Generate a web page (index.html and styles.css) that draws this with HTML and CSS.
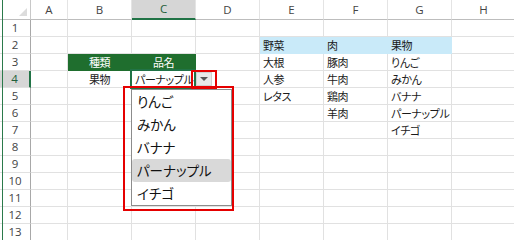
FILE: index.html
```html
<!DOCTYPE html>
<html lang="ja">
<head>
<meta charset="utf-8">
<link rel="stylesheet" href="styles.css">
</head>
<body>
<div class="sheet">
  <div class="grid">
    <div class="c corner"><span class="corner-tri"></span></div>
    <div class="c ch">A</div><div class="c ch">B</div><div class="c ch ch-sel">C</div><div class="c ch">D</div><div class="c ch">E</div><div class="c ch">F</div><div class="c ch">G</div><div class="c ch">H</div>

    <div class="c rh">1</div><div class="c"></div><div class="c"></div><div class="c"></div><div class="c"></div><div class="c"></div><div class="c"></div><div class="c"></div><div class="c"></div>

    <div class="c rh">2</div><div class="c"></div><div class="c"></div><div class="c"></div><div class="c"></div><div class="c blue">野菜</div><div class="c blue">肉</div><div class="c blue">果物</div><div class="c"></div>

    <div class="c rh">3</div><div class="c"></div><div class="c green">種類</div><div class="c green">品名</div><div class="c"></div><div class="c">大根</div><div class="c">豚肉</div><div class="c">りんご</div><div class="c"></div>

    <div class="c rh rh-sel">4</div><div class="c"></div><div class="c center">果物</div><div class="c">パーナップル</div><div class="c"></div><div class="c">人参</div><div class="c">牛肉</div><div class="c">みかん</div><div class="c"></div>

    <div class="c rh">5</div><div class="c"></div><div class="c"></div><div class="c"></div><div class="c"></div><div class="c">レタス</div><div class="c">鶏肉</div><div class="c">バナナ</div><div class="c"></div>

    <div class="c rh">6</div><div class="c"></div><div class="c"></div><div class="c"></div><div class="c"></div><div class="c"></div><div class="c">羊肉</div><div class="c">パーナップル</div><div class="c"></div>

    <div class="c rh">7</div><div class="c"></div><div class="c"></div><div class="c"></div><div class="c"></div><div class="c"></div><div class="c"></div><div class="c">イチゴ</div><div class="c"></div>

    <div class="c rh">8</div><div class="c"></div><div class="c"></div><div class="c"></div><div class="c"></div><div class="c"></div><div class="c"></div><div class="c"></div><div class="c"></div>
    <div class="c rh">9</div><div class="c"></div><div class="c"></div><div class="c"></div><div class="c"></div><div class="c"></div><div class="c"></div><div class="c"></div><div class="c"></div>
    <div class="c rh">10</div><div class="c"></div><div class="c"></div><div class="c"></div><div class="c"></div><div class="c"></div><div class="c"></div><div class="c"></div><div class="c"></div>
    <div class="c rh">11</div><div class="c"></div><div class="c"></div><div class="c"></div><div class="c"></div><div class="c"></div><div class="c"></div><div class="c"></div><div class="c"></div>
    <div class="c rh">12</div><div class="c"></div><div class="c"></div><div class="c"></div><div class="c"></div><div class="c"></div><div class="c"></div><div class="c"></div><div class="c"></div>
    <div class="c rh">13</div><div class="c"></div><div class="c"></div><div class="c"></div><div class="c"></div><div class="c"></div><div class="c"></div><div class="c"></div><div class="c"></div>
  </div>

  <div class="edge-line"></div>
  <div class="sel-box"></div>
  <div class="dd-btn"><span class="dd-tri"></span></div>
  <div class="red-btn"></div>
  <div class="dd-list">
    <div class="dd-item">りんご</div>
    <div class="dd-item">みかん</div>
    <div class="dd-item">バナナ</div>
    <div class="dd-item dd-hi">パーナップル</div>
    <div class="dd-item">イチゴ</div>
  </div>
  <div class="red-list"></div>
</div>
</body>
</html>
```

FILE: styles.css
```css
html, body {
  margin: 0;
  padding: 0;
  background: #ffffff;
  overflow: hidden;
}

.sheet {
  position: relative;
  width: 514px;
  height: 240px;
  overflow: hidden;
}

.grid {
  display: grid;
  grid-template-columns: 31px 37px repeat(7, 64px);
  grid-template-rows: 20px repeat(13, 17px);
  font-family: "Noto Sans CJK JP", sans-serif;
  font-feature-settings: "palt";
  font-size: 11px;
  letter-spacing: -0.4px;
  color: #1a1a1a;
}

.c {
  box-sizing: border-box;
  border-right: 1px solid #e1e1e1;
  border-bottom: 1px solid #e1e1e1;
  display: flex;
  align-items: center;
  padding-left: 3px;
  white-space: nowrap;
  overflow: visible;
  line-height: 1;
}

.corner {
  position: relative;
  border-right: 1px solid #c8c8c8;
  border-bottom: 1px solid #bdbdbd;
}

.corner-tri {
  position: absolute;
  right: 3px;
  bottom: 3px;
  width: 0;
  height: 0;
  border-left: 8px solid transparent;
  border-bottom: 8px solid #dcdcdc;
}

.ch {
  justify-content: center;
  padding-left: 0;
  font-family: "Open Sans", "Noto Sans", sans-serif;
  font-size: 11.5px;
  letter-spacing: 0;
  color: #444444;
  border-right: 1px solid #e4e4e4;
  border-bottom: 1px solid #bdbdbd;
}

.ch-sel {
  background: #d6d6d6;
  border-bottom: 2px solid #217346;
  color: #1f5f3a;
}

.rh {
  justify-content: center;
  padding-left: 0;
  font-family: "Open Sans", "Noto Sans", sans-serif;
  font-size: 11.5px;
  letter-spacing: 0;
  color: #444444;
  border-right: 1px solid #a8a8a8;
  border-bottom: 1px solid #e1e1e1;
}

.rh-sel {
  background: #d6d6d6;
  border-right: 2px solid #217346;
  color: #1f5f3a;
}

.center {
  justify-content: center;
  padding-left: 0;
}

.green {
  background: #1f6e2e;
  border-right-color: #1f6e2e;
  border-bottom-color: #1f6e2e;
  color: #ffffff;
  justify-content: center;
  padding-left: 0;
}

.blue {
  background: #c9eaf9;
  border-right-color: #c9eaf9;
  border-bottom-color: #c9eaf9;
}

.edge-line {
  position: absolute;
  left: 2px;
  top: 0;
  width: 1px;
  height: 240px;
  background: #2b7a4b;
}

.sel-box {
  position: absolute;
  left: 130px;
  top: 69px;
  width: 66px;
  height: 20px;
  box-sizing: border-box;
  border: 2px solid #217346;
}

.dd-btn {
  position: absolute;
  left: 196px;
  top: 72px;
  width: 16px;
  height: 14px;
  box-sizing: border-box;
  background: #e8e8e8;
  border: 1px solid #d0d0d0;
  display: flex;
  align-items: center;
  justify-content: center;
}

.dd-tri {
  width: 0;
  height: 0;
  border-left: 4px solid transparent;
  border-right: 4px solid transparent;
  border-top: 4px solid #555555;
}

.red-btn {
  position: absolute;
  left: 191px;
  top: 70px;
  width: 26px;
  height: 20px;
  box-sizing: border-box;
  border: 2px solid #e50000;
}

.dd-list {
  position: absolute;
  left: 131px;
  top: 89px;
  width: 101px;
  height: 117px;
  box-sizing: border-box;
  background: #ffffff;
  border: 1px solid #8c8c8c;
  font-family: "Noto Sans CJK JP", sans-serif;
  font-feature-settings: "palt";
  font-size: 13.5px;
  color: #111111;
  display: flex;
  flex-direction: column;
}

.dd-item {
  height: 23px;
  display: flex;
  align-items: center;
  padding-left: 5px;
  line-height: 1;
  border-radius: 3px;
}

.dd-hi {
  background: #d9d9d9;
}

.red-list {
  position: absolute;
  left: 123px;
  top: 86px;
  width: 111px;
  height: 125px;
  box-sizing: border-box;
  border: 2px solid #e50000;
}
```
